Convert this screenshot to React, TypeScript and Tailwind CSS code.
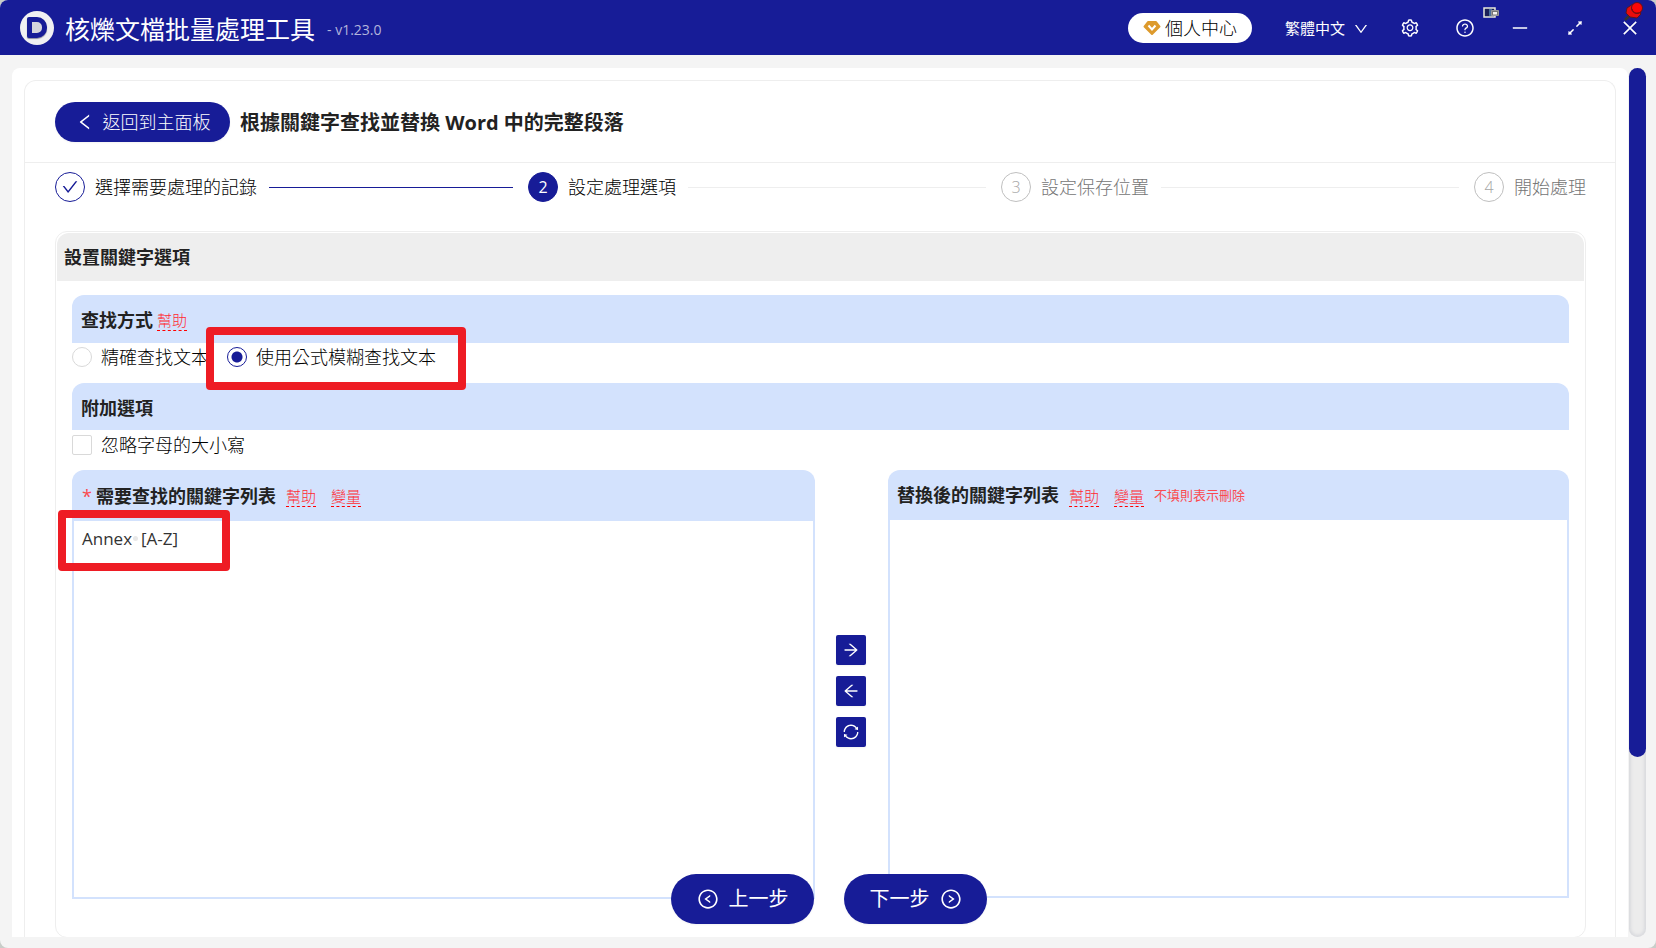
import { useState } from "react"
import type { ReactNode } from "react"
import {
  AiOutlineArrowLeft,
  AiOutlineArrowRight,
  AiOutlineCheck,
  AiOutlineClose,
  AiOutlineDown,
  AiOutlineExpandAlt,
  AiOutlineLeft,
  AiOutlineLeftCircle,
  AiOutlineMinus,
  AiOutlineQuestionCircle,
  AiOutlineRightCircle,
  AiOutlineSetting,
  AiOutlineSync,
} from "react-icons/ai"

type StepState = "done" | "current" | "todo"

const steps: { label: string; state: StepState }[] = [
  { label: "選擇需要處理的記錄", state: "done" },
  { label: "設定處理選項", state: "current" },
  { label: "設定保存位置", state: "todo" },
  { label: "開始處理", state: "todo" },
]

const circleStyles: Record<StepState, string> = {
  done: "border-[#171c97] text-[#171c97]",
  current: "border-[#171c97] bg-[#171c97] font-normal text-white",
  todo: "border-[#bfbfbf] text-[#a6a6a6]",
}

function Logo() {
  return (
    <span className="flex size-[34px] shrink-0 items-center justify-center rounded-full bg-[#f0f0f2]">
      <span className="h-[21px] w-5 rounded-l-xs rounded-r-[10px] border-[5px] border-[#171c97] bg-[#d5d5dc] shadow-[0_1px_1px_#8c8ca0]" />
    </span>
  )
}

function DiamondIcon() {
  return (
    <svg viewBox="0 0 18 16" className="h-4 w-[18px]" aria-hidden="true">
      <path d="M5 2h8l3.500 4.500L9 14 1.500 6.500z" fill="#dd9a2c" stroke="#dd9a2c" strokeWidth="2" strokeLinejoin="round" />
      <path d="M5.500 5.500 9 9.500l3.500-4" fill="none" stroke="#fff" strokeWidth="2" />
    </svg>
  )
}

function PinIcon() {
  return (
    <svg viewBox="0 0 20 20" className="size-5" aria-hidden="true">
      <path d="M1 19l4-4" stroke="#333" strokeWidth="2.500" />
      <path d="M3 7l6-4 8 10-4 4-7-1-4-4z" fill="#e80d0d" stroke="#5d1420" />
      <circle cx="13" cy="7" r="5.500" fill="#fb0606" stroke="#5d1420" />
      <path d="M8 8c1 4 5 5 9 3" fill="none" stroke="#7d0a0a" />
    </svg>
  )
}

function PipIcon() {
  return (
    <svg viewBox="0 0 16 12" className="h-3 w-4" aria-hidden="true">
      <path d="M1 1h11v9H1z" fill="#1b2058" stroke="#e9e9dc" strokeWidth="1.500" />
      <path d="M6 2h3v7H6z" fill="#4a6f9c" />
      <path d="M8.500 3.500h7v5h-7z" fill="#777" stroke="#999" />
      <path d="M10 5h4v2.500h-4z" fill="#f5f5f0" />
    </svg>
  )
}

function TitleBar() {
  return (
    <header className="relative flex h-[55px] shrink-0 items-center bg-[#171c97] pl-5 pr-4 font-normal text-white">
      <Logo />
      <span className="ml-[11px] pt-0.5 text-[25px] leading-8">核爍文檔批量處理工具</span>
      <span className="ml-3 pt-1 text-sm text-[#b3b5dc]">- v1.23.0</span>

      <button className="ml-auto flex h-[30px] items-center gap-1 rounded-full bg-white px-[15px] text-lg font-light text-black">
        <DiamondIcon />
        個人中心
      </button>
      <button className="ml-[33px] flex items-center gap-2 pt-0.5 text-[15px]">
        繁體中文
        <AiOutlineDown className="size-4" />
      </button>

      <div className="ml-[31px] flex items-center gap-[35px]">
        <button aria-label="設定"><AiOutlineSetting className="size-5" /></button>
        <button aria-label="幫助"><AiOutlineQuestionCircle className="size-5" /></button>
        <button aria-label="最小化"><AiOutlineMinus className="size-5" /></button>
        <button aria-label="最大化"><AiOutlineExpandAlt className="size-5" /></button>
        <button aria-label="關閉"><AiOutlineClose className="size-5" /></button>
      </div>

      {/* Floating window markers */}
      <span className="absolute right-[157px] top-[7px]"><PipIcon /></span>
      <span className="absolute right-3 top-px"><PinIcon /></span>
    </header>
  )
}

function Steps() {
  return (
    <ol className="flex items-center gap-[15px] pl-[30px] pr-[29px] pt-[9px] text-lg leading-[30px]">
      {steps.map((step, i) => {
        const last = i === steps.length - 1
        return (
          <li key={step.label} className={last ? "flex items-center" : "flex flex-1 items-center"}>
            <span
              className={`flex size-[30px] shrink-0 items-center justify-center rounded-full border text-base ${circleStyles[step.state]}`}
            >
              {step.state === "done" ? <AiOutlineCheck className="size-[18px]" /> : i + 1}
            </span>
            <span className={`ml-2.5 whitespace-nowrap ${step.state === "todo" ? "text-[#757575]" : "text-black"}`}>
              {step.label}
            </span>
            {!last && (
              <span className={`ml-3 h-px flex-1 ${step.state === "done" ? "bg-[#171c97]" : "bg-[#eeeeee]"}`} />
            )}
          </li>
        )
      })}
    </ol>
  )
}

function HintLink({ children }: { children: ReactNode }) {
  return (
    <a href="#" className="border-b border-dashed border-[#ff0000] text-[15px] leading-5 text-[#ff2a30]">
      {children}
    </a>
  )
}

function Highlight({ className }: { className: string }) {
  return <span className={`pointer-events-none absolute z-10 rounded-sm border-8 border-[#ee1c24] ${className}`} />
}

function MoveButton({ label, children }: { label: string; children: ReactNode }) {
  return (
    <button
      aria-label={label}
      className="flex size-[30px] items-center justify-center rounded-xs bg-[#171c97] text-white shadow-xs"
    >
      {children}
    </button>
  )
}

export default function App() {
  const [mode, setMode] = useState("fuzzy")
  const [ignoreCase, setIgnoreCase] = useState(false)
  const [keywords, setKeywords] = useState("Annex  [A-Z]")
  const [replacements, setReplacements] = useState("")

  const radioClass =
    "size-5 appearance-none rounded-full border border-[#d9d9d9] bg-white checked:border-[#171c97] checked:bg-[radial-gradient(circle,#171c97_5px,white_6px)]"

  return (
    <div className="bg-[#c9cdc9]">
      <div className="relative flex h-screen flex-col overflow-hidden rounded-lg bg-[#f4f4f4] font-['Open_Sans','Noto_Sans_CJK_TC',sans-serif] font-light text-black">
        <TitleBar />

        <div className="flex min-h-0 flex-1 pb-[11px] pl-3 pr-2.5 pt-[13px]">
          <main className="min-w-0 flex-1 overflow-hidden rounded-t-lg bg-white px-3 pt-3">
            <div className="rounded-t-xl border border-b-0 border-[#eeeeee]">
              {/* Page heading */}
              <div className="flex items-center gap-2.5 border-b border-[#eeeeee] px-[30px] pb-5 pt-[21px]">
                <button className="flex h-10 w-[175px] items-center justify-center gap-2 rounded-full bg-[#171c97] text-lg text-white shadow-xs">
                  <AiOutlineLeft className="size-5" />
                  返回到主面板
                </button>
                <h1 className="pt-0.5 text-xl font-bold text-[#222]">根據關鍵字查找並替換 Word 中的完整段落</h1>
              </div>

              <Steps />

              <section className="ml-[30px] mr-[29px] mt-[29px] rounded-xl border border-[#eeeeee] p-px pb-[38px]">
                <h2 className="rounded-t-xl bg-[#eeeeee] px-[7px] text-lg font-bold leading-[48px] text-[#222]">設置關鍵字選項</h2>

                <div className="px-[15px] pt-3.5">
                  <div className="flex h-12 items-center gap-1 rounded-t-xl bg-[#d3e2fd] px-[9px] pt-0.5">
                    <h3 className="text-lg font-bold text-[#222]">查找方式</h3>
                    <HintLink>幫助</HintLink>
                  </div>
                  <div className="relative flex h-7 items-center gap-[18px] text-lg">
                    <label className="flex items-center gap-[9px]">
                      <input type="radio" name="mode" className={radioClass} checked={mode === "exact"} onChange={() => setMode("exact")} />
                      精確查找文本
                    </label>
                    <label className="flex items-center gap-[9px]">
                      <input type="radio" name="mode" className={radioClass} checked={mode === "fuzzy"} onChange={() => setMode("fuzzy")} />
                      使用公式模糊查找文本
                    </label>
                    <Highlight className="-top-4 left-[134px] h-[63px] w-[260px]" />
                  </div>

                  <div className="mt-3 flex h-[47px] items-center rounded-t-xl bg-[#d3e2fd] px-[9px] pt-0.5">
                    <h3 className="text-lg font-bold text-[#222]">附加選項</h3>
                  </div>
                  <label className="flex h-[30px] w-fit items-center gap-[9px] text-lg">
                    <input
                      type="checkbox"
                      className="size-5 appearance-none rounded-xs border border-[#d9d9d9] bg-white checked:bg-[#171c97]"
                      checked={ignoreCase}
                      onChange={(e) => setIgnoreCase(e.target.checked)}
                    />
                    忽略字母的大小寫
                  </label>

                  {/* Keyword lists */}
                  <div className="mt-2.5 flex items-start">
                    <div className="relative min-w-0 flex-[743]">
                      <div className="flex h-[51px] items-center rounded-t-xl bg-[#d3e2fd] px-2.5">
                        <label htmlFor="keywords" className="mr-2.5 text-lg font-bold text-[#222]">
                          <span className="mr-1 font-normal text-[#fb4a4f]">*</span>
                          需要查找的關鍵字列表
                        </label>
                        <span className="flex gap-[15px] pt-0.5">
                          <HintLink>幫助</HintLink>
                          <HintLink>變量</HintLink>
                        </span>
                      </div>
                      <textarea
                        id="keywords"
                        className="block h-[378px] w-full resize-none border-2 border-t-0 border-[#d3e2fd] bg-white px-2 py-1.5 text-[17px] font-normal leading-6 text-[#333] outline-none"
                        value={keywords}
                        onChange={(e) => setKeywords(e.target.value)}
                      />
                      <span className="pointer-events-none absolute left-[61px] top-[66px] size-[5px] rounded-full bg-[#e8e8e8]" />
                      <Highlight className="-left-3.5 top-10 h-[61px] w-[172px]" />
                    </div>

                    <div className="ml-[21px] mr-[22px] mt-[165px] flex flex-col gap-[11px]">
                      <MoveButton label="移到右側"><AiOutlineArrowRight className="size-[18px]" /></MoveButton>
                      <MoveButton label="移到左側"><AiOutlineArrowLeft className="size-[18px]" /></MoveButton>
                      <MoveButton label="交換"><AiOutlineSync className="size-[18px]" /></MoveButton>
                    </div>

                    <div className="min-w-0 flex-[681]">
                      <div className="flex h-[50px] items-center rounded-t-xl bg-[#d3e2fd] px-[9px]">
                        <label htmlFor="replacements" className="mr-2.5 text-lg font-bold text-[#222]">
                          替換後的關鍵字列表
                        </label>
                        <span className="flex gap-[15px] pt-0.5">
                          <HintLink>幫助</HintLink>
                          <HintLink>變量</HintLink>
                        </span>
                        <span className="ml-2.5 pt-0.5 text-[13px] font-normal text-[#fb4a4f]">不填則表示刪除</span>
                      </div>
                      <textarea
                        id="replacements"
                        className="block h-[378px] w-full resize-none border-2 border-t-0 border-[#d3e2fd] bg-white px-2 py-1.5 text-[17px] font-normal leading-6 text-[#333] outline-none"
                        value={replacements}
                        onChange={(e) => setReplacements(e.target.value)}
                      />
                    </div>
                  </div>
                </div>
              </section>
            </div>
          </main>

          {/* Scroll track */}
          <div className="ml-px w-[17px] shrink-0 rounded-full bg-[#ececec] shadow-[inset_0_0_3px_2px_#d9dade]">
            <div className="h-[79.3%] rounded-full bg-[#171c97]" />
          </div>
        </div>

        <nav className="absolute inset-x-0 bottom-6 z-20 flex justify-center gap-[30px] pl-0.5 text-xl font-normal text-white">
          <button className="flex h-[50px] w-[143px] items-center justify-center gap-2.5 rounded-full bg-[#171c97] shadow-xs">
            <AiOutlineLeftCircle className="size-[22px]" />
            上一步
          </button>
          <button className="flex h-[50px] w-[143px] items-center justify-center gap-2.5 rounded-full bg-[#171c97] shadow-xs">
            下一步
            <AiOutlineRightCircle className="size-[22px]" />
          </button>
        </nav>
      </div>
    </div>
  )
}
